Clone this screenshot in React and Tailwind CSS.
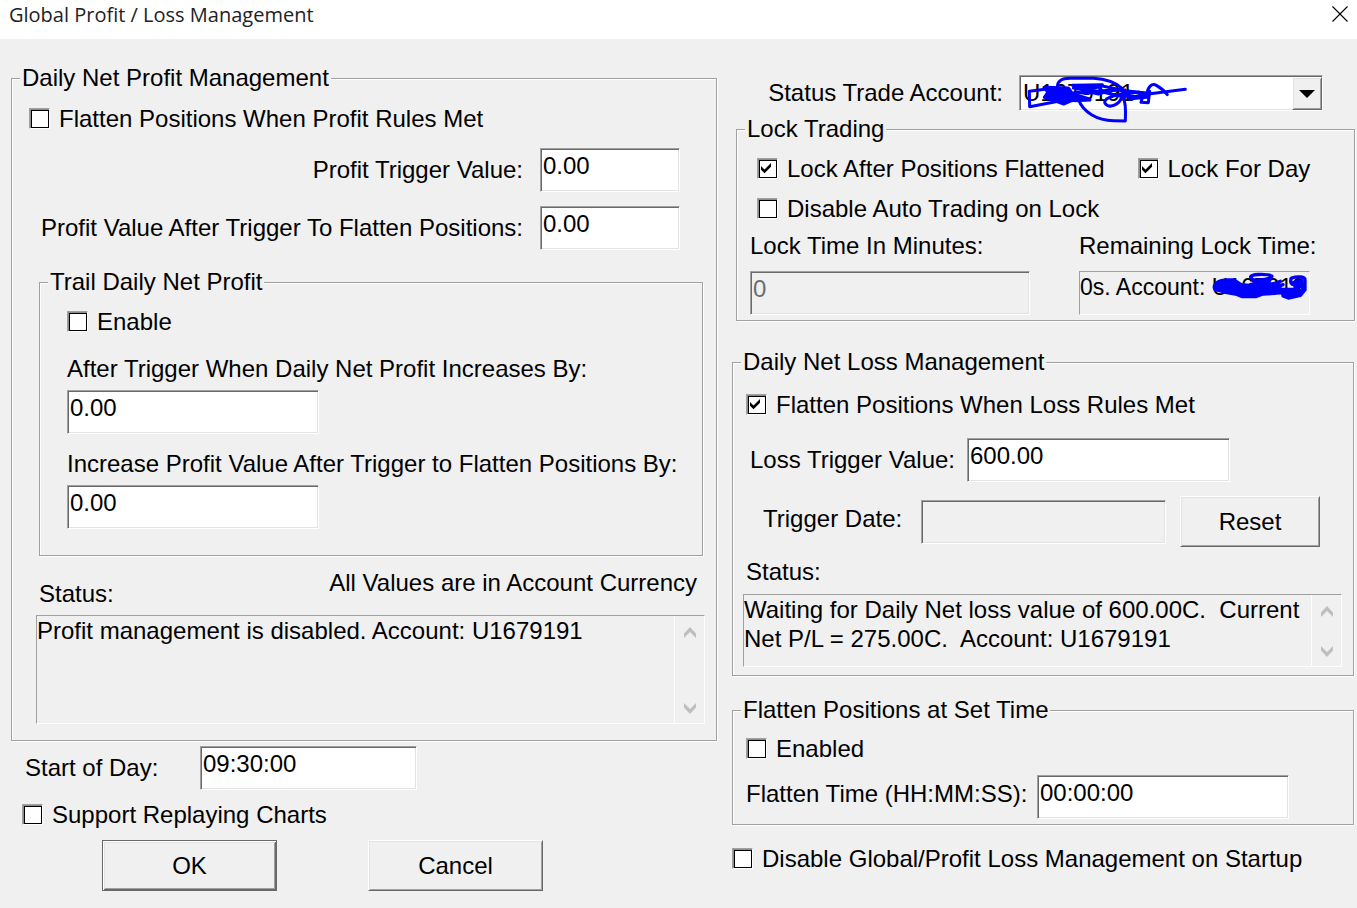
import React from "react";

const SUNKEN =
  "border border-t-[#a0a0a0] border-l-[#a0a0a0] border-r-white border-b-white shadow-[inset_1px_1px_#696969,inset_-1px_-1px_#e3e3e3]";
const THIN_SUNKEN =
  "border border-t-[#a0a0a0] border-l-[#a0a0a0] border-r-white border-b-white";
const RAISED =
  "border border-t-white border-l-white border-r-[#696969] border-b-[#696969] shadow-[inset_1px_1px_#e3e3e3,inset_-1px_-1px_#a0a0a0]";

function Group({ title, className = "", children }) {
  return (
    <fieldset
      className={`min-w-0 border border-[#a0a0a0] shadow-[1px_1px_#fff,inset_1px_1px_#fff] ${className}`}
    >
      <legend className="ml-2 bg-[#f0f0f0] px-0.5">{title}</legend>
      {children}
    </fieldset>
  );
}

function Check({ label, checked = false, className = "" }) {
  return (
    <label className={`flex w-fit items-start gap-[9px] whitespace-nowrap ${className}`}>
      <span className="relative mt-[3px] flex">
        <input
          type="checkbox"
          defaultChecked={checked}
          className="peer h-[21px] w-[21px] appearance-none border border-t-[#a0a0a0] border-l-[#a0a0a0] border-r-white border-b-white bg-white shadow-[inset_1px_1px_#8c8c8c,inset_2px_2px_#000,inset_-1px_-1px_#000]"
        />
        <svg
          viewBox="0 0 21 21"
          className="pointer-events-none absolute inset-0 hidden h-[21px] w-[21px] peer-checked:block"
          aria-hidden="true"
        >
          <path d="M4 8 L7.5 11.5 L14 5 V8.8 L7.5 15.3 L4 11.8 Z" fill="#000" />
        </svg>
      </span>
      {label}
    </label>
  );
}

function Field({ id, value, className = "", disabled = false }) {
  return (
    <input
      id={id}
      type="text"
      defaultValue={value}
      disabled={disabled}
      className={`h-11 rounded-none pt-px pr-px pb-[9px] pl-0.5 outline-none ${SUNKEN} ${
        disabled ? "bg-[#f0f0f0] text-[#6d6d6d]" : "bg-white"
      } ${className}`}
    />
  );
}

function Chevron({ up }) {
  return (
    <svg viewBox="0 0 12 11" className="h-[11px] w-3" aria-hidden="true">
      <path
        d={up ? "M0 6.5 L6 0 L12 6.5 V11 L6 5 L0 11 Z" : "M0 4.5 L6 11 L12 4.5 V0 L6 6 L0 0 Z"}
        fill="#bfbfbf"
      />
    </svg>
  );
}

function StatusBox({ id, value, className = "" }) {
  return (
    <div className={`flex ${THIN_SUNKEN} ${className}`}>
      <textarea
        id={id}
        readOnly
        defaultValue={value}
        className="block min-w-0 flex-1 resize-none overflow-hidden bg-transparent leading-[29px] outline-none"
      />
      <div className="flex w-[30px] flex-col justify-between border-l border-white">
        <button type="button" aria-label="Scroll up" className="flex h-8 items-center justify-center">
          <Chevron up />
        </button>
        <button type="button" aria-label="Scroll down" className="flex h-[30px] items-center justify-center">
          <Chevron />
        </button>
      </div>
    </div>
  );
}

function AccountScribble() {
  return (
    <svg
      viewBox="0 0 540 180"
      className="pointer-events-none absolute -top-[5px] -left-1 h-[60px] w-[180px]"
      fill="none"
      stroke="#0000ff"
      strokeWidth="9"
      strokeLinecap="round"
      strokeLinejoin="round"
      aria-hidden="true"
    >
      <path d="M128 50 C126 34 140 25 165 25 L235 25 C275 27 305 40 322 56" />
      <path d="M90 58 L43 64 L44 110 L130 94 L222 86" />
      <path d="M90 52 L160 54 L172 70 L220 86 L170 92 L146 102 L124 94 L88 82 L98 68 Z" fill="#0000ff" />
      <path d="M172 46 L262 44 L240 54 L175 54 L230 64 L330 60 M180 66 L212 70 L262 66 L330 82 M170 80 L225 90 L180 92" />
      <path d="M180 50 L212 62 L250 50 L262 64 L300 58 L250 72 L200 60" />
      <path d="M190 88 C204 126 246 152 296 152 L331 153 C333 118 332 92 322 76" />
      <path d="M322 78 C314 104 284 118 270 100 C264 84 294 78 328 70" />
      <path d="M262 48 L330 62 L402 70 L342 84 L400 82 M318 62 L345 78 L310 74 L372 66" />
      <path d="M340 64 L398 72 L384 82 L342 88 M404 64 L400 98 L378 97 L382 84 L350 78" />
      <path d="M396 72 C398 52 410 38 424 46 C438 54 448 62 457 74" />
      <path d="M400 72 L511 58" />
    </svg>
  );
}

function RemainingScribble() {
  return (
    <svg
      viewBox="0 0 360 135"
      className="pointer-events-none absolute -top-[7px] right-0 -mr-[11px] h-[45px] w-[120px]"
      fill="none"
      stroke="#0000ff"
      strokeWidth="10"
      strokeLinecap="round"
      strokeLinejoin="round"
      aria-hidden="true"
    >
      <path d="M82 48 C50 48 34 62 42 76 L70 84 L104 90 L124 98 L164 98 L186 90 L222 88 L238 74 L212 64 L160 66 L120 62 L100 48 Z" fill="#0000ff" />
      <path d="M150 42 C140 28 200 30 212 36 C220 44 160 56 150 42 M156 50 L206 50 L148 62 L214 60" />
      <path d="M200 66 L238 52 L206 76 L246 62 M200 88 L258 86 L220 76 L280 76" />
      <path d="M246 80 L284 76 L308 82 L298 94 L262 102 L246 96 Z" fill="#0000ff" />
      <path d="M270 44 C266 62 274 66 300 60 L302 50 L282 54 M272 42 C290 36 314 38 312 48 L312 78 M278 56 L284 74 L300 62 L306 74" />
    </svg>
  );
}

export default function App() {
  return (
    <main className="min-h-screen bg-[#f0f0f0] font-['Liberation_Sans',Arial,sans-serif] text-2xl leading-7 text-black [&_button]:cursor-default">
      <header className="flex h-[39px] items-start justify-between bg-white px-[9px]">
        <h1 className="font-['Open_Sans','Noto_Sans',sans-serif] text-xl leading-[30px] text-[#222]">
          Global Profit / Loss Management
        </h1>
        <button type="button" aria-label="Close" className="mt-1.5">
          <svg viewBox="0 0 16 16" className="h-4 w-4" aria-hidden="true">
            <path d="M0.5 0.5 L15.5 15.5 M15.5 0.5 L0.5 15.5" stroke="#000" strokeWidth="1.1" />
          </svg>
        </button>
      </header>

      <form
        className="grid grid-cols-[706fr_623fr] gap-x-[15px] pr-0.5 pl-[11px]"
        onSubmit={(e) => e.preventDefault()}
      >
        <div className="min-w-0 pt-[25px]">
          <Group title="Daily Net Profit Management">
            <Check label="Flatten Positions When Profit Rules Met" className="mt-[13px] ml-[17px]" />

            <div className="mt-[15px] grid grid-cols-[1fr_140px] items-center gap-x-[17px] gap-y-3.5 pr-9 text-right">
              <label htmlFor="profit-trigger">Profit Trigger Value:</label>
              <Field id="profit-trigger" value="0.00" />
              <label htmlFor="profit-after">Profit Value After Trigger To Flatten Positions:</label>
              <Field id="profit-after" value="0.00" />
            </div>

            <Group title="Trail Daily Net Profit" className="mt-[18px] mr-[13px] ml-[27px]">
              <div className="flex flex-col pt-3 pb-[26px] pl-[27px]">
                <Check label="Enable" />
                <label htmlFor="trail-trigger" className="mt-[19px]">
                  After Trigger When Daily Net Profit Increases By:
                </label>
                <Field id="trail-trigger" value="0.00" className="mt-[7px] w-[252px]" />
                <label htmlFor="trail-increase" className="mt-4 whitespace-nowrap">
                  Increase Profit Value After Trigger to Flatten Positions By:
                </label>
                <Field id="trail-increase" value="0.00" className="mt-[7px] w-[252px]" />
              </div>
            </Group>

            <div className="mt-[13px] flex h-[39px] justify-between pr-[19px] pl-[27px]">
              <label htmlFor="profit-status" className="self-end">
                Status:
              </label>
              <p>All Values are in Account Currency</p>
            </div>
            <StatusBox
              id="profit-status"
              value="Profit management is disabled. Account: U1679191"
              className="mt-[7px] mr-[11px] mb-4 ml-6 h-[109px]"
            />
          </Group>

          <div className="mt-[5px] flex items-center pl-3.5">
            <label htmlFor="start-of-day" className="w-[175px]">
              Start of Day:
            </label>
            <Field id="start-of-day" value="09:30:00" className="w-[217px]" />
          </div>
          <Check label="Support Replaying Charts" className="mt-[11px] ml-[11px]" />
          <div className="mt-[11px] flex gap-[91px] pl-[91px]">
            <button
              type="submit"
              className="h-[51px] w-[175px] border border-[#696969] shadow-[inset_1px_1px_#fff,inset_-1px_-1px_#696969,inset_2px_2px_#e3e3e3,inset_-2px_-2px_#a0a0a0]"
            >
              OK
            </button>
            <button type="button" className={`h-[51px] w-[175px] ${RAISED}`}>
              Cancel
            </button>
          </div>
        </div>

        <div className="min-w-0 pt-9">
          <div className="flex items-center justify-end gap-4 pr-8">
            <label htmlFor="account">Status Trade Account:</label>
            <div className="relative flex w-[304px]">
              <select
                id="account"
                className={`h-9 w-full appearance-none rounded-none bg-white pl-[3px] outline-none ${SUNKEN}`}
              >
                <option>U1679191</option>
              </select>
              <span
                className={`pointer-events-none absolute top-0.5 right-px bottom-px flex w-[30px] items-center justify-center bg-[#f0f0f0] ${RAISED}`}
              >
                <svg viewBox="0 0 16 8" className="h-2 w-4" aria-hidden="true">
                  <path d="M0 0 H16 L8 8 Z" fill="#000" />
                </svg>
              </span>
              <AccountScribble />
            </div>
          </div>

          <Group title="Lock Trading" className="mt-1 ml-1">
            <div className="mt-3 flex gap-[33px] pl-5">
              <Check label="Lock After Positions Flattened" checked />
              <Check label="Lock For Day" checked />
            </div>
            <Check label="Disable Auto Trading on Lock" className="mt-3 ml-5" />
            <div className="mt-[9px] mb-[5px] grid grid-cols-[280px_1fr] gap-x-[49px] gap-y-[11px] pl-[13px]">
              <label htmlFor="lock-minutes">Lock Time In Minutes:</label>
              <label htmlFor="remaining">Remaining Lock Time:</label>
              <Field id="lock-minutes" value="0" disabled />
              <div className="relative w-[231px]">
                <output
                  id="remaining"
                  className={`block h-11 pt-px text-[23px] whitespace-nowrap ${THIN_SUNKEN}`}
                >
                  0s. Account: U167919
                </output>
                <RemainingScribble />
              </div>
            </div>
          </Group>

          <Group title="Daily Net Loss Management" className="mt-[27px] mr-px">
            <Check label="Flatten Positions When Loss Rules Met" checked className="mt-[15px] ml-[13px]" />
            <div className="mt-[19px] flex items-center pl-[17px]">
              <label htmlFor="loss-trigger" className="w-[217px]">
                Loss Trigger Value:
              </label>
              <Field id="loss-trigger" value="600.00" className="w-[263px]" />
            </div>
            <div className="mt-3.5 flex items-center pl-[30px]">
              <label htmlFor="trigger-date" className="w-[158px] pb-1.5">
                Trigger Date:
              </label>
              <Field id="trigger-date" value="" disabled className="w-[245px]" />
              <button type="button" className={`ml-3.5 h-[51px] w-[140px] ${RAISED}`}>
                Reset
              </button>
            </div>
            <label htmlFor="loss-status" className="mt-[11px] ml-[13px] block w-fit">
              Status:
            </label>
            <StatusBox
              id="loss-status"
              value="Waiting for Daily Net loss value of 600.00C.  Current Net P/L = 275.00C.  Account: U1679191"
              className="mt-2 mr-[11px] mb-2 ml-2.5 h-[73px]"
            />
          </Group>

          <Group title="Flatten Positions at Set Time" className="mt-5 mr-px">
            <Check label="Enabled" className="mt-[11px] ml-[13px]" />
            <div className="mt-3 mb-[5px] flex items-center pl-[13px]">
              <label htmlFor="flatten-time" className="w-[291px] pb-1.5">
                Flatten Time (HH:MM:SS):
              </label>
              <Field id="flatten-time" value="00:00:00" className="w-[252px]" />
            </div>
          </Group>

          <Check label="Disable Global/Profit Loss Management on Startup" className="mt-5" />
        </div>
      </form>
    </main>
  );
}
